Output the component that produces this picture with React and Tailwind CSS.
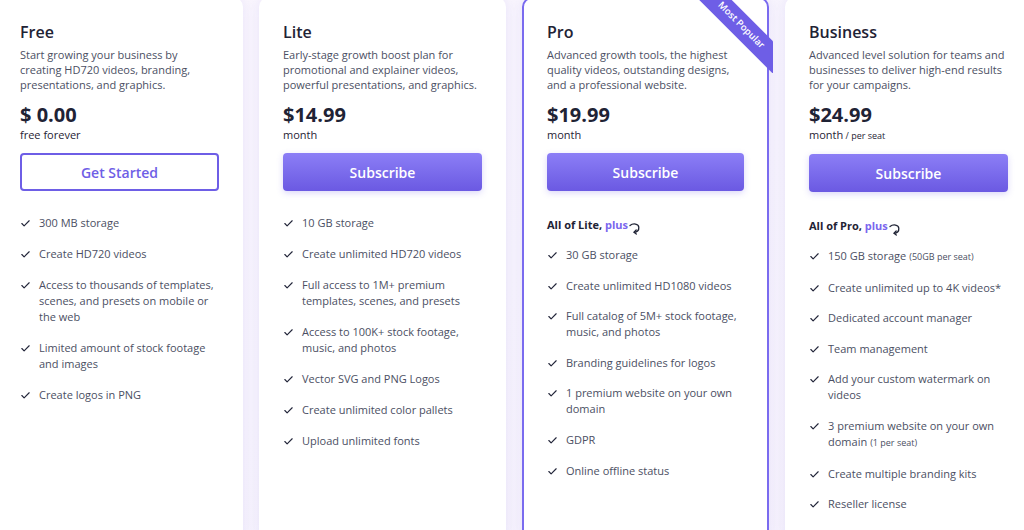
import React from 'react';
import { Check } from 'lucide-react';

const plans = [
  {
    name: 'Free',
    desc: 'Start growing your business by creating HD720 videos, branding, presentations, and graphics.',
    price: '$ 0.00',
    period: 'free forever',
    cta: 'Get Started',
    outline: true,
    features: [
      '300 MB storage',
      'Create HD720 videos',
      'Access to thousands of templates, scenes, and presets on mobile or the web',
      'Limited amount of stock footage and images',
      'Create logos in PNG',
    ],
  },
  {
    name: 'Lite',
    desc: 'Early-stage growth boost plan for promotional and explainer videos, powerful presentations, and graphics.',
    price: '$14.99',
    period: 'month',
    cta: 'Subscribe',
    features: [
      '10 GB storage',
      'Create unlimited HD720 videos',
      'Full access to 1M+ premium templates, scenes, and presets',
      'Access to 100K+ stock footage, music, and photos',
      'Vector SVG and PNG Logos',
      'Create unlimited color pallets',
      'Upload unlimited fonts',
    ],
  },
  {
    name: 'Pro',
    desc: 'Advanced growth tools, the highest quality videos, outstanding designs, and a professional website.',
    price: '$19.99',
    period: 'month',
    cta: 'Subscribe',
    popular: true,
    includes: 'All of Lite,',
    features: [
      '30 GB storage',
      'Create unlimited HD1080 videos',
      'Full catalog of 5M+ stock footage, music, and photos',
      'Branding guidelines for logos',
      '1 premium website on your own domain',
      'GDPR',
      'Online offline status',
    ],
  },
  {
    name: 'Business',
    desc: 'Advanced level solution for teams and businesses to deliver high-end results for your campaigns.',
    price: '$24.99',
    period: 'month',
    periodNote: ' / per seat',
    cta: 'Subscribe',
    includes: 'All of Pro,',
    features: [
      ['150 GB storage', '(50GB per seat)'],
      'Create unlimited up to 4K videos*',
      'Dedicated account manager',
      'Team management',
      'Add your custom watermark on videos',
      ['3 premium website on your own domain', '(1 per seat)'],
      'Create multiple branding kits',
      'Reseller license',
    ],
  },
];

const CurlyArrow = () => (
  <svg width="12" height="13" viewBox="0 0 12 13" fill="none" className="inline-block ml-[1px] -mb-[5px]">
    <path d="M1 3.5 C4 1, 9.5 1.5, 9.8 5.2 C10 8, 8 10, 5.2 10.3" stroke="#1f2335" strokeWidth="1.3" strokeLinecap="round" />
    <path d="M7.2 8 L5 10.3 L7.3 12" stroke="#1f2335" strokeWidth="1.3" strokeLinecap="round" strokeLinejoin="round" />
  </svg>
);

const Feature = ({ item }) => {
  const [text, note] = Array.isArray(item) ? item : [item, null];
  return (
    <li className="flex items-start gap-[8px]">
      <Check className="w-[11px] h-[11px] mt-[3px] shrink-0 text-[#23263a]" strokeWidth={2.5} />
      <span>
        {text}
        {note && <span className="inline-block ml-[3px] text-[9px] leading-4">{note}</span>}
      </span>
    </li>
  );
};

const Card = ({ plan }) => (
  <div
    className={`relative shrink-0 w-[247px] h-[548px] -mt-[3px] rounded-[10px] bg-white shadow-[0_0_14px_rgba(120,105,235,0.14)] ${
      plan.popular ? 'border-2 border-[#7a6bef] px-[23px] pt-[23px]' : 'px-6 pt-[25px]'
    }`}
  >
    {plan.popular && (
      <div className="absolute -top-[2px] -right-[6px] w-[82px] h-[76px] overflow-hidden">
        <div className="absolute top-[17px] -right-[24px] w-[112px] h-[23px] rotate-45 bg-[#6e5ee6] text-white text-[9.5px] font-semibold flex items-center justify-center">
          Most Popular
        </div>
      </div>
    )}
    <h3 className="text-[16px] leading-5 font-semibold text-[#1f2335]">{plan.name}</h3>
    <p className="mt-[5px] text-[11px] leading-[15px] text-[#4b4f63]">{plan.desc}</p>
    <div className="mt-[11px] text-[20px] leading-6 font-bold text-[#1f2335]">{plan.price}</div>
    <div className="text-[11px] leading-[15px] text-[#1f2335]">
      {plan.period}
      {plan.periodNote && <span className="text-[9px]">{plan.periodNote}</span>}
    </div>
    {plan.outline ? (
      <button className="mt-[11px] w-full h-[38px] rounded-[4px] border-2 border-[#6e5ee6] text-[14px] font-semibold text-[#6e5ee6] bg-white">
        {plan.cta}
      </button>
    ) : (
      <button className="mt-[11px] w-full h-[38px] rounded-[4px] bg-gradient-to-b from-[#8c7ef6] to-[#6b59e2] text-[14px] font-semibold text-white shadow-[0_2px_6px_rgba(110,94,230,0.25)]">
        {plan.cta}
      </button>
    )}
    {plan.includes && (
      <div className="mt-[26px] text-[11px] leading-4 font-bold text-[#1f2335]">
        {plan.includes} <span className="text-[#7a66ee]">plus</span>
        <CurlyArrow />
      </div>
    )}
    <ul
      className={`${plan.includes ? 'mt-[14px] gap-[14.6px]' : 'mt-[24px] gap-[15px]'} flex flex-col text-[11px] leading-4 text-[#4b4f63]`}
    >
      {plan.features.map((f, i) => (
        <Feature key={i} item={f} />
      ))}
    </ul>
  </div>
);

export default function App() {
  return (
    <div
      className="w-[1024px] h-[530px] overflow-hidden bg-gradient-to-br from-[#fbf7fd] via-[#f8f5fd] to-[#f7f3fc]"
      style={{ fontFamily: '"Open Sans", "Liberation Sans", sans-serif' }}
    >
      <div className="flex gap-4 -ml-[4px]">
        {plans.map((p) => (
          <Card key={p.name} plan={p} />
        ))}
      </div>
    </div>
  );
}
